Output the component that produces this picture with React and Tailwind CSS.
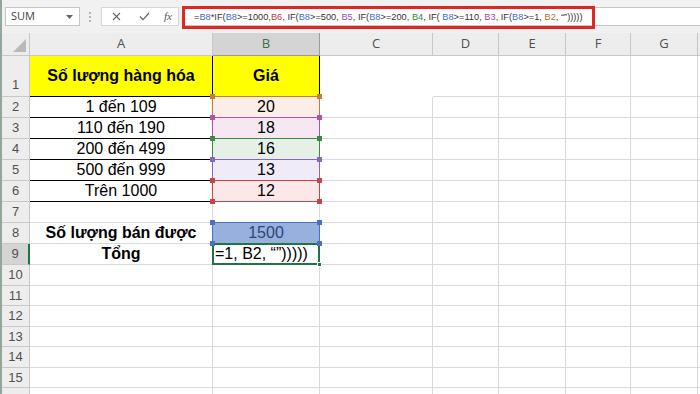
import React from "react";

// Excel-like sheet: formula bar + grid with highlighted B column

const ROWS_EMPTY = [10, 11, 12, 13, 14, 15];

const refs = [
  { t: "=", c: "" },
  { t: "B8", c: "text-[#3f6fc4]" },
  { t: "*IF(", c: "" },
  { t: "B8", c: "text-[#3f6fc4]" },
  { t: ">=1000,", c: "" },
  { t: "B6", c: "text-[#c43a3a]" },
  { t: ", IF(", c: "" },
  { t: "B8", c: "text-[#3f6fc4]" },
  { t: ">=500, ", c: "" },
  { t: "B5", c: "text-[#8a52b8]" },
  { t: ", IF(", c: "" },
  { t: "B8", c: "text-[#3f6fc4]" },
  { t: ">=200, ", c: "" },
  { t: "B4", c: "text-[#2f8a3c]" },
  { t: ", IF( ", c: "" },
  { t: "B8", c: "text-[#3f6fc4]" },
  { t: ">=110, ", c: "" },
  { t: "B3", c: "text-[#a0489a]" },
  { t: ", IF(", c: "" },
  { t: "B8", c: "text-[#3f6fc4]" },
  { t: ">=1, ", c: "" },
  { t: "B2", c: "text-[#c0682e]" },
  { t: ", \u201C\u201D)))))", c: "" },
];

const RowHead = ({ n, h, selected, bottom }) => (
  <div
    className={`w-[28px] shrink-0 flex justify-center border-r border-b border-[#c8c8c8] text-[13px] text-[#505050] ${h} ${
      bottom ? "items-end pb-[2px]" : "items-center"
    } ${selected ? "bg-[#d4d4d4] border-r-2 border-r-[#217346]" : "bg-[#ededed]"}`}
  >
    {n}
  </div>
);

// colored reference box drawn over a B cell
const RefBox = ({ border, square }) => (
  <>
    <div
      className={`absolute -left-px -top-px right-[-1px] bottom-[-1px] z-10 border pointer-events-none ${border}`}
    />
    <div className={`absolute left-[-3px] top-[-3px] w-[5px] h-[5px] z-20 ${square}`} />
    <div className={`absolute right-[-3px] top-[-3px] w-[5px] h-[5px] z-20 ${square}`} />
    <div className={`absolute left-[-3px] bottom-[-3px] w-[5px] h-[5px] z-20 ${square}`} />
    <div className={`absolute right-[-3px] bottom-[-3px] w-[5px] h-[5px] z-20 ${square}`} />
  </>
);

const Rest = ({ c1 = "border-r border-b" }) => (
  <>
    <div className={`w-[113px] shrink-0 border-[#dadada] ${c1}`} />
    <div className="w-[66px] shrink-0 border-r border-b border-[#dadada]" />
    <div className="w-[67px] shrink-0 border-r border-b border-[#dadada]" />
    <div className="w-[65px] shrink-0 border-r border-b border-[#dadada]" />
    <div className="w-[67px] shrink-0 border-r border-b border-[#dadada]" />
    <div className="flex-1 border-b border-[#dadada]" />
  </>
);

const dataRows = [
  { n: 2, a: "1 đến 109", b: "20", fill: "bg-[#fbeee7]", border: "border-[#c67a3e]", sq: "bg-[#c67a3e]" },
  { n: 3, a: "110 đến 190", b: "18", fill: "bg-[#f6e8f3]", border: "border-[#b0549f]", sq: "bg-[#b0549f]" },
  { n: 4, a: "200 đến 499", b: "16", fill: "bg-[#e5f1e7]", border: "border-[#3a8a44]", sq: "bg-[#3a8a44]" },
  { n: 5, a: "500 đến 999", b: "13", fill: "bg-[#efebf7]", border: "border-[#8a63c6]", sq: "bg-[#8a63c6]" },
  { n: 6, a: "Trên 1000", b: "12", fill: "bg-[#fbe9ea]", border: "border-[#c8434b]", sq: "bg-[#c8434b]" },
];

export default function App() {
  return (
    <div className="w-[700px] h-[394px] overflow-hidden bg-white font-['Liberation_Sans',Arial,sans-serif] border-l-2 border-[#8fa89a]">
      {/* formula bar */}
      <div className="h-[33px] bg-[#f1f1f1] flex items-center">
        <div className="ml-[3px] w-[75px] h-[19px] bg-white border border-[#c6c6c6] flex items-center justify-between pl-[5px] pr-[6px]">
          <span className="text-[11px] text-[#444] font-['Open_Sans',sans-serif]">SUM</span>
          <svg width="7" height="4" viewBox="0 0 7 4">
            <path d="M0 0h7L3.5 4z" fill="#666" />
          </svg>
        </div>
        <div className="ml-[9px] flex flex-col gap-[2px]">
          <span className="w-[2px] h-[2px] bg-[#b5b5b5]" />
          <span className="w-[2px] h-[2px] bg-[#b5b5b5]" />
          <span className="w-[2px] h-[2px] bg-[#b5b5b5]" />
        </div>
        <div className="ml-[10px] w-[78px] h-[19px] bg-white border border-[#d6d6d6] flex items-center">
          <svg className="ml-[10px]" width="9" height="9" viewBox="0 0 9 9">
            <path d="M1 1l7 7M8 1L1 8" stroke="#666" strokeWidth="1.1" />
          </svg>
          <svg className="ml-[18px]" width="11" height="9" viewBox="0 0 11 9">
            <path d="M1 4.5l3 3.2L10 1" stroke="#666" strokeWidth="1.2" fill="none" />
          </svg>
          <span className="ml-[14px] text-[11px] italic text-[#555] font-['Liberation_Serif',serif]">fx</span>
        </div>
        <div className="ml-[3px] flex-1 h-[19px] bg-white border-y border-[#c6c6c6] relative">
          <div className="absolute left-0 top-[-2px] w-[413px] h-[23px] border-[3px] border-[#df2823] flex items-center pl-[9px]">
            <span className="text-[9.25px] text-[#333] whitespace-nowrap leading-none">
              {refs.map((r, i) => (
                <span key={i} className={r.c}>
                  {r.t}
                </span>
              ))}
            </span>
          </div>
        </div>
      </div>

      {/* column headers */}
      <div className="flex h-[23px] bg-[#ededed] text-[13px] text-[#505050] font-['Open_Sans',sans-serif]">
        <div className="w-[28px] shrink-0 border-r border-b border-[#c8c8c8] flex items-end justify-end pr-[3px] pb-[3px]">
          <svg width="13" height="13" viewBox="0 0 13 13">
            <path d="M13 0V13H0z" fill="#b9b9b9" />
          </svg>
        </div>
        <div className="w-[183px] shrink-0 border-r border-b border-[#c8c8c8] flex items-center justify-center">A</div>
        <div className="w-[107px] shrink-0 border-r border-b border-[#9a9a9a] bg-[#d4d4d4] flex items-center justify-center text-[#3d6b4d]">
          B
        </div>
        <div className="w-[113px] shrink-0 border-r border-b border-[#c8c8c8] flex items-center justify-center">C</div>
        <div className="w-[66px] shrink-0 border-r border-b border-[#c8c8c8] flex items-center justify-center">D</div>
        <div className="w-[67px] shrink-0 border-r border-b border-[#c8c8c8] flex items-center justify-center">E</div>
        <div className="w-[65px] shrink-0 border-r border-b border-[#c8c8c8] flex items-center justify-center">F</div>
        <div className="w-[67px] shrink-0 border-r border-b border-[#c8c8c8] flex items-center justify-center">G</div>
        <div className="flex-1 border-b border-[#c8c8c8]" />
      </div>

      {/* row 1 */}
      <div className="flex h-[41px]">
        <RowHead n={1} h="h-[41px]" bottom />
        <div className="w-[183px] shrink-0 bg-[#ffff00] border-r border-b border-black flex items-center justify-center text-[16px] font-bold text-black">
          Số lượng hàng hóa
        </div>
        <div className="w-[107px] shrink-0 bg-[#ffff00] border-r border-b border-black flex items-center justify-center text-[16px] font-bold text-black">
          Giá
        </div>
        <Rest c1="" />
      </div>

      {/* rows 2-6 */}
      {dataRows.map((r) => (
        <div key={r.n} className="flex h-[21px]">
          <RowHead n={r.n} h="h-[21px]" />
          <div className="w-[183px] shrink-0 border-r border-b border-r-[#dadada] border-b-black flex items-center justify-center text-[16px] text-black">
            {r.a}
          </div>
          <div
            className={`relative w-[107px] shrink-0 border-r border-b border-[#dadada] flex items-center justify-center text-[16px] text-black ${r.fill}`}
          >
            {r.b}
            <RefBox border={r.border} square={r.sq} />
          </div>
          <Rest />
        </div>
      ))}

      {/* row 7 */}
      <div className="flex h-[21px]">
        <RowHead n={7} h="h-[21px]" />
        <div className="w-[183px] shrink-0 border-r border-b border-[#dadada]" />
        <div className="w-[107px] shrink-0 border-r border-b border-[#dadada]" />
        <Rest />
      </div>

      {/* row 8 */}
      <div className="flex h-[21px]">
        <RowHead n={8} h="h-[21px]" />
        <div className="w-[183px] shrink-0 border-r border-b border-[#dadada] flex items-center justify-center text-[16px] font-bold text-black">
          Số lượng bán được
        </div>
        <div className="relative w-[107px] shrink-0 bg-[#97b0de] border-r border-b border-[#dadada] flex items-center justify-center text-[16px] text-[#2f4670]">
          1500
          <RefBox border="border-[#4a70bf]" square="bg-[#4a70bf]" />
        </div>
        <Rest />
      </div>

      {/* row 9 */}
      <div className="flex h-[21px]">
        <RowHead n={9} h="h-[21px]" selected />
        <div className="w-[183px] shrink-0 border-r border-b border-[#dadada] flex items-center justify-center text-[16px] font-bold text-black">
          Tổng
        </div>
        <div className="relative w-[107px] shrink-0 bg-white border-r border-b border-[#dadada] flex items-center pl-[2px] text-[16px] text-black whitespace-nowrap">
          =1, B2, {"\u201C\u201D)))))"}
          <div className="absolute -left-px -top-px right-[-1px] bottom-[-1px] z-10 border-2 border-[#217346]" />
          <div className="absolute right-[-3px] bottom-[-3px] w-[5px] h-[5px] z-20 bg-[#217346] border border-white" />
        </div>
        <Rest />
      </div>

      {/* empty rows */}
      {ROWS_EMPTY.map((n) => (
        <div key={n} className="flex h-[20.5px]">
          <RowHead n={n} h="h-[20.5px]" />
          <div className="w-[183px] shrink-0 border-r border-b border-[#dadada]" />
          <div className="w-[107px] shrink-0 border-r border-b border-[#dadada]" />
          <Rest />
        </div>
      ))}

      {/* partial row at the bottom edge */}
      <div className="flex h-[20.5px]">
        <RowHead n="" h="h-[20.5px]" />
        <div className="w-[183px] shrink-0 border-r border-[#dadada]" />
        <div className="w-[107px] shrink-0 border-r border-[#dadada]" />
        <Rest c1="border-r" />
      </div>
    </div>
  );
}
